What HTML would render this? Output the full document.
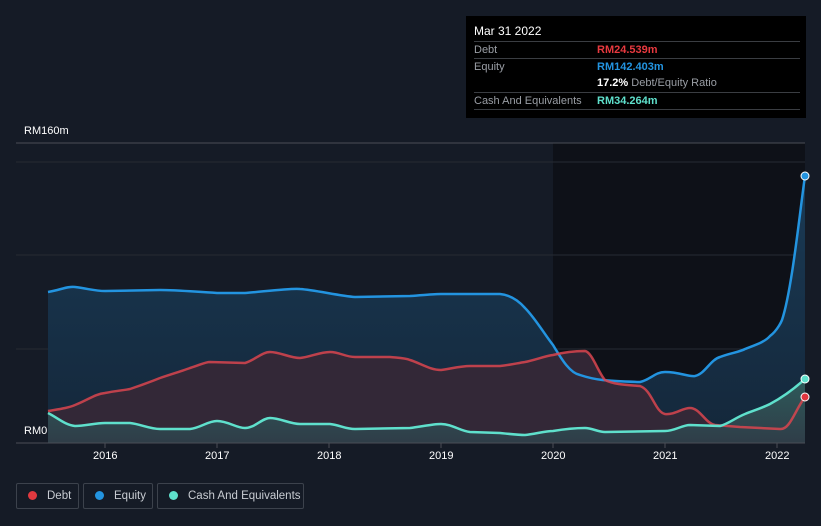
<!DOCTYPE html>
<html><head><meta charset="utf-8"><style>
body{margin:0;width:821px;height:526px;background:#151b26;font-family:"Liberation Sans",sans-serif;overflow:hidden;position:relative}
.tt{position:absolute;left:466px;top:16px;width:340px;height:102px;background:#000;color:#fff;font-size:11px}
.tt .r{position:absolute;left:8px;width:326px;border-top:1px solid #3a3d42;height:16px;line-height:16px}
.g{color:#9a9ea5}
.leg{position:absolute;top:483px;height:26px;border:1px solid #3c424c;border-radius:2px;color:#c8ccd2;font-size:11.5px;line-height:24px;box-sizing:border-box;white-space:nowrap}
.leg i{display:inline-block;width:9px;height:9px;border-radius:50%;margin:0 10px 0 11px;vertical-align:-1px}
.ax{position:absolute;color:#fff;font-size:11px}
</style></head><body>
<svg width="821" height="526" style="position:absolute;left:0;top:0">
<defs>
<linearGradient id="ge" x1="0" y1="0" x2="0" y2="1"><stop offset="0" stop-color="#1a3a55"/><stop offset="1" stop-color="#14273a"/></linearGradient>
<linearGradient id="gc" x1="0" y1="0" x2="0" y2="1"><stop offset="0" stop-color="#2e5a5a"/><stop offset="1" stop-color="#2f3d48"/></linearGradient>
</defs>
<rect x="553" y="143" width="252" height="300" fill="#0e1118"/>
<line x1="16" y1="143" x2="805" y2="143" stroke="#4a4e56"/>
<line x1="16" y1="162" x2="805" y2="162" stroke="#262b33"/>
<line x1="16" y1="255" x2="805" y2="255" stroke="#262b33"/>
<line x1="16" y1="349" x2="805" y2="349" stroke="#262b33"/>
<path d="M48,292 C60,290 68,286 75,287 C90,289 95,291 105,291 L160,290 C175,290 185,291 217,293 L245,293 C260,292 290,288 300,289 C315,290 340,296 355,297 L410,296 C425,295 435,294 441,294 L500,294 C510,295 518,300 525,308 C535,318 545,335 553,345 C562,360 570,373 580,375 C595,380 605,381 640,382 C650,380 655,372 665,372 C680,372 688,377 695,376 C705,374 710,360 720,357 C730,353 740,352 745,349 C755,345 765,342 770,336 C778,330 782,320 782,320 C792,290 800,210 805,176 L805,443 L48,443Z" fill="url(#ge)"/>
<path d="M48,411 C60,409 68,408 75,405 C88,400 95,394 105,393 C115,391 125,390 130,389 C145,384 155,380 160,378 C175,373 185,370 190,368 C200,365 205,362 210,362 L245,363 C255,360 262,352 270,352 C280,352 290,358 300,358 C310,357 320,352 330,352 C340,352 345,357 355,357 L390,357 C400,358 405,358 410,360 C420,363 430,370 441,370 C450,369 460,366 470,366 L500,366 C510,365 518,363 525,362 C535,360 545,356 553,355 C565,352 575,351 585,351 C592,352 598,372 605,380 C615,385 630,385 640,386 C652,390 655,412 665,414 C675,415 682,408 690,408 C700,408 705,423 715,425 L740,427 L780,429 C790,430 795,410 805,397 L805,443 L48,443Z" fill="#352837" opacity="0.95"/>
<path d="M48,413 C58,418 65,425 75,426 C85,426 95,423 105,423 L130,423 C140,424 150,429 160,429 L190,429 C200,428 208,421 217,421 C228,421 236,428 245,428 C255,428 262,418 270,418 C280,418 290,424 300,424 L330,424 C340,425 345,429 355,429 L410,428 C420,427 432,424 441,424 C452,424 460,431 470,432 L500,433 C510,434 518,435 525,435 C535,434 545,431 553,431 C565,429 575,428 585,428 C592,428 598,432 605,432 L665,431 C675,431 682,425 690,425 L720,426 C728,424 735,418 745,414 C755,410 762,408 770,404 C785,396 795,388 805,379 L805,443 L48,443Z" fill="url(#gc)"/>
<path d="M48,292 C60,290 68,286 75,287 C90,289 95,291 105,291 L160,290 C175,290 185,291 217,293 L245,293 C260,292 290,288 300,289 C315,290 340,296 355,297 L410,296 C425,295 435,294 441,294 L500,294 C510,295 518,300 525,308 C535,318 545,335 553,345 C562,360 570,373 580,375 C595,380 605,381 640,382 C650,380 655,372 665,372 C680,372 688,377 695,376 C705,374 710,360 720,357 C730,353 740,352 745,349 C755,345 765,342 770,336 C778,330 782,320 782,320 C792,290 800,210 805,176" fill="none" stroke="#2394e0" stroke-width="2.5"/>
<path d="M48,411 C60,409 68,408 75,405 C88,400 95,394 105,393 C115,391 125,390 130,389 C145,384 155,380 160,378 C175,373 185,370 190,368 C200,365 205,362 210,362 L245,363 C255,360 262,352 270,352 C280,352 290,358 300,358 C310,357 320,352 330,352 C340,352 345,357 355,357 L390,357 C400,358 405,358 410,360 C420,363 430,370 441,370 C450,369 460,366 470,366 L500,366 C510,365 518,363 525,362 C535,360 545,356 553,355 C565,352 575,351 585,351 C592,352 598,372 605,380 C615,385 630,385 640,386 C652,390 655,412 665,414 C675,415 682,408 690,408 C700,408 705,423 715,425 L740,427 L780,429 C790,430 795,410 805,397" fill="none" stroke="#d9454f" stroke-width="2.5" opacity="0.85"/>
<path d="M48,413 C58,418 65,425 75,426 C85,426 95,423 105,423 L130,423 C140,424 150,429 160,429 L190,429 C200,428 208,421 217,421 C228,421 236,428 245,428 C255,428 262,418 270,418 C280,418 290,424 300,424 L330,424 C340,425 345,429 355,429 L410,428 C420,427 432,424 441,424 C452,424 460,431 470,432 L500,433 C510,434 518,435 525,435 C535,434 545,431 553,431 C565,429 575,428 585,428 C592,428 598,432 605,432 L665,431 C675,431 682,425 690,425 L720,426 C728,424 735,418 745,414 C755,410 762,408 770,404 C785,396 795,388 805,379" fill="none" stroke="#5fe0cc" stroke-width="2.5"/>
<line x1="16" y1="443" x2="805" y2="443" stroke="#4a4e56"/>
<g stroke="#4a4e56"><line x1="105" y1="443" x2="105" y2="448"/><line x1="217" y1="443" x2="217" y2="448"/><line x1="329" y1="443" x2="329" y2="448"/><line x1="441" y1="443" x2="441" y2="448"/><line x1="553" y1="443" x2="553" y2="448"/><line x1="665" y1="443" x2="665" y2="448"/><line x1="777" y1="443" x2="777" y2="448"/></g>
<circle cx="805" cy="176" r="4" fill="#2394e0" stroke="#fff" stroke-width="1"/>
<circle cx="805" cy="379" r="4" fill="#5fe0cc" stroke="#fff" stroke-width="1"/>
<circle cx="805" cy="397" r="4" fill="#e0363f" stroke="#fff" stroke-width="1"/>
</svg>
<div class="ax" style="left:24px;top:125px">RM160m</div>
<div class="ax" style="left:24px;top:425px">RM0</div>
<div class="ax" style="left:93px;top:450px">2016</div>
<div class="ax" style="left:205px;top:450px">2017</div>
<div class="ax" style="left:317px;top:450px">2018</div>
<div class="ax" style="left:429px;top:450px">2019</div>
<div class="ax" style="left:541px;top:450px">2020</div>
<div class="ax" style="left:653px;top:450px">2021</div>
<div class="ax" style="left:765px;top:450px">2022</div>
<div class="tt">
<div style="position:absolute;left:8px;top:8px;font-size:12px">Mar 31 2022</div>
<div class="r" style="top:25px"><span class="g">Debt</span><span style="position:absolute;left:123px;color:#e8393f;font-weight:bold">RM24.539m</span></div>
<div class="r" style="top:42px;border-bottom:none"><span class="g">Equity</span><span style="position:absolute;left:123px;color:#2394e0;font-weight:bold">RM142.403m</span></div>
<div class="r" style="top:59px;border-top:none"><span style="position:absolute;left:123px"><b>17.2%</b> <span class="g">Debt/Equity Ratio</span></span></div>
<div class="r" style="top:76px;border-bottom:1px solid #3a3d42"><span class="g">Cash And Equivalents</span><span style="position:absolute;left:123px;color:#5fe0cc;font-weight:bold">RM34.264m</span></div>
</div>
<div class="leg" style="left:16px;width:63px"><i style="background:#e0393f"></i>Debt</div>
<div class="leg" style="left:83px;width:70px"><i style="background:#2394e0"></i>Equity</div>
<div class="leg" style="left:157px;width:147px"><i style="background:#5fe0cc"></i>Cash And Equivalents</div>
</body></html>
